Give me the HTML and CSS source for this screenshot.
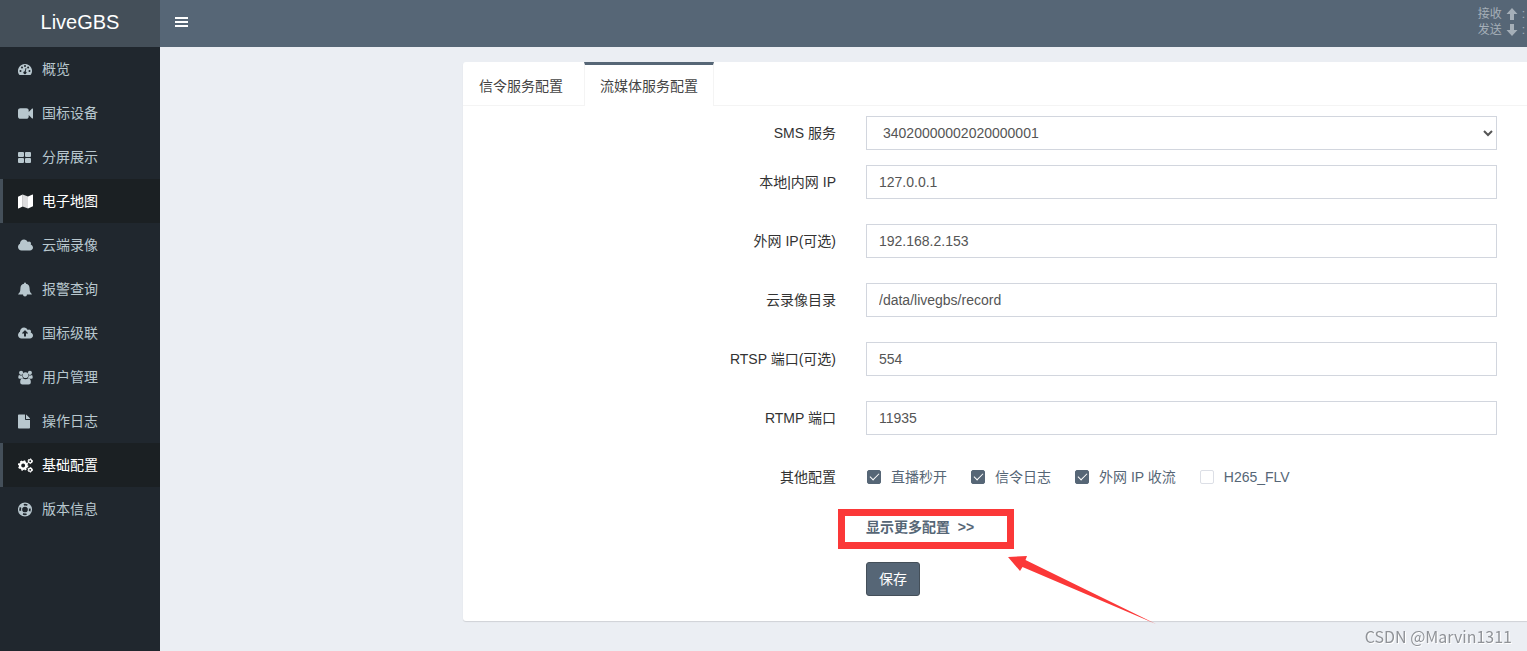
FILE: index.html
```html
<!DOCTYPE html>
<html lang="zh-CN">
<head>
<meta charset="utf-8">
<title>LiveGBS</title>
<link rel="stylesheet" href="styles.css">
</head>
<body>
<div class="app">
  <aside class="sidebar">
    <a class="logo" href="#">LiveGBS</a>
    <nav class="menu">
      <a class="menu-item" href="#"><svg class="icon" viewBox="0 0 15 15"><path fill-rule="evenodd" d="M7 2a7 7 0 0 0-6 10.600q.2.400.7.400h10.600q.5 0 .7-.4A7 7 0 0 0 7 2zM2.500 8a1 1 0 1 1 0 2 1 1 0 0 1 0-2zM4 4.500a1 1 0 1 1 0 2 1 1 0 0 1 0-2zM7 3a1 1 0 1 1 0 2 1 1 0 0 1 0-2zM10.100 4.500a1 1 0 1 1 0 2 1 1 0 0 1 0-2zM11.500 8a1 1 0 1 1 0 2 1 1 0 0 1 0-2zM7.600 6l.9.200-.8 3.200a1.500 1.500 0 1 1-1-.2z"/></svg><span>概览</span></a>
      <a class="menu-item" href="#"><svg class="icon" viewBox="0 0 1792 1792"><path d="M1792 352v1088q0 42-39 59-13 5-25 5-27 0-45-19l-403-403v166q0 119-84.500 203.500t-203.500 84.500h-704q-119 0-203.500-84.500t-84.500-203.500v-704q0-119 84.500-203.500t203.500-84.500h704q119 0 203.500 84.500t84.500 203.500v165l403-402q18-19 45-19 12 0 25 5 39 17 39 59z"/></svg><span>国标设备</span></a>
      <a class="menu-item" href="#"><svg class="icon" viewBox="0 0 15 15"><path d="M1 2h4q1 0 1 1v3q0 1-1 1H1Q0 7 0 6V3q0-1 1-1zM8 2h4q1 0 1 1v3q0 1-1 1H8Q7 7 7 6V3q0-1 1-1zM1 8h4q1 0 1 1v3q0 1-1 1H1q-1 0-1-1V9q0-1 1-1zM8 8h4q1 0 1 1v3q0 1-1 1H8q-1 0-1-1V9q0-1 1-1z"/></svg><span>分屏展示</span></a>
      <a class="menu-item active" href="#"><svg class="icon" viewBox="0 0 15 15"><path d="M0 2.700 4.700.5v12L.5 14.500q-.5.200-.5-.3z"/><path opacity=".85" d="M4.700.5 10 2.500v12l-5.300-2z"/><path d="M10 2.500 14.500.500q.5-.2.500.3v11.500l-5 2.200z"/></svg><span>电子地图</span></a>
      <a class="menu-item" href="#"><svg class="icon" viewBox="64 0 1920 1792"><path d="M1984 1152q0 159-112.500 271.500t-271.500 112.500h-1088q-185 0-316.500-131.500t-131.500-316.500q0-132 71-241.500t187-163.500q-2-28-2-43 0-212 150-362t362-150q158 0 286.500 88t187.500 230q70-62 166-62 106 0 181 75t75 181q0 75-41 138 129 30 213 134.500t84 239.500z"/></svg><span>云端录像</span></a>
      <a class="menu-item" href="#"><svg class="icon" viewBox="1 0 15 15"><path d="M8 .4a1 1 0 0 1 1 1v.4c2.400.4 3.600 2.200 3.600 4.600 0 3 .8 4.400 2.200 5.500v.6H10a2 2 0 0 1-4 0H1.200v-.6c1.400-1.100 2.200-2.500 2.200-5.500 0-2.400 1.200-4.200 3.600-4.600v-.4a1 1 0 0 1 1-1z"/></svg><span>报警查询</span></a>
      <a class="menu-item" href="#"><svg class="icon" viewBox="64 0 1920 1792"><path d="M1344 864q0-14-9-23l-352-352q-9-9-23-9t-23 9l-351 351q-10 12-10 24 0 14 9 23t23 9h224v352q0 13 9.500 22.500t22.500 9.500h192q13 0 22.500-9.500t9.500-22.500v-352h224q13 0 22.500-9.500t9.500-22.500zm640 288q0 159-112.500 271.500t-271.500 112.500h-1088q-185 0-316.500-131.500t-131.500-316.500q0-130 70-240t188-165q-2-30-2-43 0-212 150-362t362-150q156 0 285.500 87t188.500 231q71-62 166-62 106 0 181 75t75 181q0 76-41 138 130 31 213.500 135.500t83.500 238.500z"/></svg><span>国标级联</span></a>
      <a class="menu-item" href="#"><svg class="icon" viewBox="0 0 16 16"><circle cx="3.300" cy="3" r="2.200"/><circle cx="12.700" cy="3" r="2.200"/><circle cx="8" cy="5.500" r="3"/><path d="M1.200 5.300q2 1.200 3.400.2-.1 1.700.8 2.900-1.500.1-2.300 1H1.800Q.3 9.400.3 8q0-2.300.9-2.700zM14.800 5.300q-2 1.200-3.400.2.100 1.700-.8 2.900 1.500.1 2.300 1h1.300q1.500 0 1.500-1.400 0-2.300-.9-2.700zM5 8.800q3 2.200 6 0 2.700.3 2.700 4.200 0 2.500-2.400 2.500H4.700q-2.400 0-2.400-2.500 0-3.900 2.700-4.200z"/></svg><span>用户管理</span></a>
      <a class="menu-item" href="#"><svg class="icon" viewBox="0 0 15 15"><path d="M0 1.300Q0 .5.800.5H7v4.700q0 .8.800.8H12v7.700q0 .8-.8.800H.8q-.8 0-.8-.8zM8 .5q.5.100 3.700 3.600.3.300.3.900H8z"/></svg><span>操作日志</span></a>
      <a class="menu-item active" href="#"><svg class="icon" viewBox="0 0 16 16"><g fill="none" stroke="currentColor"><circle cx="5.500" cy="8" r="3.400" stroke-width="2.600"/><circle cx="5.500" cy="8" r="4.800" stroke-width="1.600" stroke-dasharray="1.900 1.870"/><circle cx="13" cy="3.400" r="1.700" stroke-width="1.400"/><circle cx="13" cy="3.400" r="2.500" stroke-width="1" stroke-dasharray="1.300"/><circle cx="13" cy="12.600" r="1.700" stroke-width="1.400"/><circle cx="13" cy="12.600" r="2.500" stroke-width="1" stroke-dasharray="1.300"/></g></svg><span>基础配置</span></a>
      <a class="menu-item" href="#"><svg class="icon" viewBox="0 0 15 15"><g fill="none" stroke="currentColor"><circle cx="7" cy="7.500" r="6.400" stroke-width="1.300"/><circle cx="7" cy="7.500" r="3.400" stroke-width="1.100"/><circle cx="7" cy="7.500" r="4.900" stroke-width="3" stroke-dasharray="4 3.697" stroke-dashoffset="-1.850"/></g></svg><span>版本信息</span></a>
    </nav>
  </aside>

  <div class="page">
    <header class="topbar">
      <button class="toggle" type="button" aria-label="菜单"><svg viewBox="0 0 13 10"><path d="M0 0h13v2H0zM0 4h13v2H0zM0 8h13v2H0z"/></svg></button>
      <div class="traffic">
        <div class="traffic-row"><span>接收</span><svg viewBox="0 0 12 12"><path d="M6 0 11.500 6H8v6H4V6H.5z"/></svg><span>:</span></div>
        <div class="traffic-row"><span>发送</span><svg viewBox="0 0 12 12"><path d="M6 12 11.500 6H8V0H4v6H.5z"/></svg><span>:</span></div>
      </div>
    </header>

    <main class="content">
      <section class="panel">
        <div class="tabs">
          <a class="tab" href="#">信令服务配置</a>
          <a class="tab current" href="#">流媒体服务配置</a>
        </div>
        <form class="form">
          <div class="row first">
            <label for="sms">SMS 服务</label>
            <select class="control" id="sms"><option>34020000002020000001</option></select>
          </div>
          <div class="row"><label for="lan">本地|内网 IP</label><input class="control" id="lan" type="text" value="127.0.0.1"></div>
          <div class="row"><label for="wan">外网 IP(可选)</label><input class="control" id="wan" type="text" value="192.168.2.153"></div>
          <div class="row"><label for="dir">云录像目录</label><input class="control" id="dir" type="text" value="/data/livegbs/record"></div>
          <div class="row"><label for="rtsp">RTSP 端口(可选)</label><input class="control" id="rtsp" type="text" value="554"></div>
          <div class="row"><label for="rtmp">RTMP 端口</label><input class="control" id="rtmp" type="text" value="11935"></div>
          <div class="row options">
            <span class="row-title">其他配置</span>
            <div class="checks">
              <label class="check"><input type="checkbox" checked>直播秒开</label>
              <label class="check"><input type="checkbox" checked>信令日志</label>
              <label class="check"><input type="checkbox" checked>外网 IP 收流</label>
              <label class="check"><input type="checkbox">H265_FLV</label>
            </div>
          </div>
          <div class="row actions">
            <div class="more">
              <a class="more-link" href="#">显示更多配置&nbsp; &gt;&gt;</a>
              <span class="highlight"></span>
              <svg class="arrow" viewBox="0 0 150 70"><path d="M0 3 19 2 17.500 6 148 70 14.500 13 12 17z"/></svg>
            </div>
            <button class="save" type="button">保存</button>
          </div>
        </form>
      </section>
    </main>
  </div>
</div>
<div class="watermark">CSDN @Marvin1311</div>
</body>
</html>
```
FILE: styles.css
```css
* { box-sizing: border-box; }

body {
  margin: 0;
  font: 14px/20px "Liberation Sans", "Noto Sans CJK SC", sans-serif;
  color: #333;
  background: #ebeef3;
}

a { color: inherit; text-decoration: none; }

button, input, select { font: inherit; }

.app { display: flex; min-height: 100vh; }

/* Sidebar */
.sidebar { flex: 0 0 160px; background: #20272e; }

.logo {
  display: block;
  height: 47px;
  line-height: 44px;
  text-align: center;
  font-size: 20px;
  color: #fff;
  background: #444f59;
}

.menu-item {
  display: flex;
  align-items: center;
  gap: 9px;
  height: 44px;
  padding-left: 15px;
  border-left: 3px solid transparent;
  color: #b8c7ce;
}

.menu-item.active {
  color: #fff;
  background: #1b2023;
  border-left-color: #444f59;
}

.icon { width: 15px; height: 15px; fill: currentColor; }

/* Top bar */
.page { flex: 1; min-width: 0; }

.topbar {
  display: flex;
  align-items: flex-start;
  justify-content: space-between;
  height: 47px;
  background: #566676;
}

.toggle {
  height: 44px;
  padding: 0 15px;
  border: 0;
  background: none;
}

.toggle svg { display: block; width: 13px; height: 10px; fill: #fff; }

.traffic {
  padding: 6px 2px 0 0;
  font-size: 12px;
  line-height: 16px;
  color: #a5afb8;
}

.traffic-row { display: flex; align-items: center; gap: 4px; }

.traffic-row svg { width: 12px; height: 12px; fill: currentColor; }

/* Panel */
.content { padding: 15px 0 0 303px; }

.panel {
  background: #fff;
  border-radius: 3px 0 0 3px;
  box-shadow: 0 1px 1px rgba(0, 0, 0, 0.12);
}

.tabs { display: flex; height: 44px; border-bottom: 1px solid #f4f4f4; }

.tab {
  height: 44px;
  padding: 11px 15px 0 16px;
  border-top: 3px solid transparent;
  border-right: 1px solid transparent;
  color: #444;
}

.tab + .tab { margin-left: 5px; }

.tab.current {
  padding-left: 15px;
  border-left: 1px solid #f4f4f4;
  border-top-color: #566676;
  border-right-color: #f4f4f4;
  background: #fff;
}

.form { padding: 10px 30px 25px 0; }

.row {
  display: grid;
  grid-template-columns: 373fr 631fr;
  column-gap: 30px;
  align-items: center;
  min-height: 34px;
  margin-bottom: 25px;
}

.row.first { margin-bottom: 15px; }

.row > label, .row-title { text-align: right; }

.control {
  width: 100%;
  height: 34px;
  padding: 6px 12px;
  border: 1px solid #d2d6de;
  border-radius: 0;
  color: #555;
  background: #fff;
}

.checks { display: flex; gap: 23px; color: #566676; }

.check { display: flex; align-items: center; gap: 10px; }

.check input {
  appearance: none;
  display: grid;
  place-items: center;
  width: 14px;
  height: 14px;
  margin: 0 0 0 1px;
  border: 1px solid #dcdfe6;
  border-radius: 2px;
  background: #fff;
}

.check input:checked { border-color: #566676; background: #566676; }

.check input:checked::after {
  content: "";
  width: 8px;
  height: 4px;
  margin-bottom: 3px;
  border: solid #fff;
  border-width: 0 0 1px 1px;
  transform: rotate(-45deg);
}

.row.options { margin-bottom: 23px; }

.row.actions { row-gap: 25px; margin-bottom: 0; justify-items: start; }

.more, .save { grid-column: 2; }

.more { position: relative; height: 20px; }

.more-link { font-weight: bold; color: #566676; }

.highlight {
  position: absolute;
  left: -28px;
  top: -8px;
  width: 176px;
  height: 40px;
  border: 7px solid #fb3838;
  pointer-events: none;
}

.arrow {
  position: absolute;
  left: 142px;
  top: 37px;
  width: 150px;
  height: 70px;
  fill: #fb3838;
  pointer-events: none;
}

.save {
  height: 34px;
  padding: 0 12px;
  border: 1px solid #444f59;
  border-radius: 3px;
  color: #fff;
  background: #566676;
}

.watermark {
  position: fixed;
  right: 15px;
  bottom: 5px;
  font-family: "Noto Sans CJK SC", sans-serif;
  font-size: 16px;
  color: #909398;
  text-shadow: 1px 1px 0 #fff;
}
```
